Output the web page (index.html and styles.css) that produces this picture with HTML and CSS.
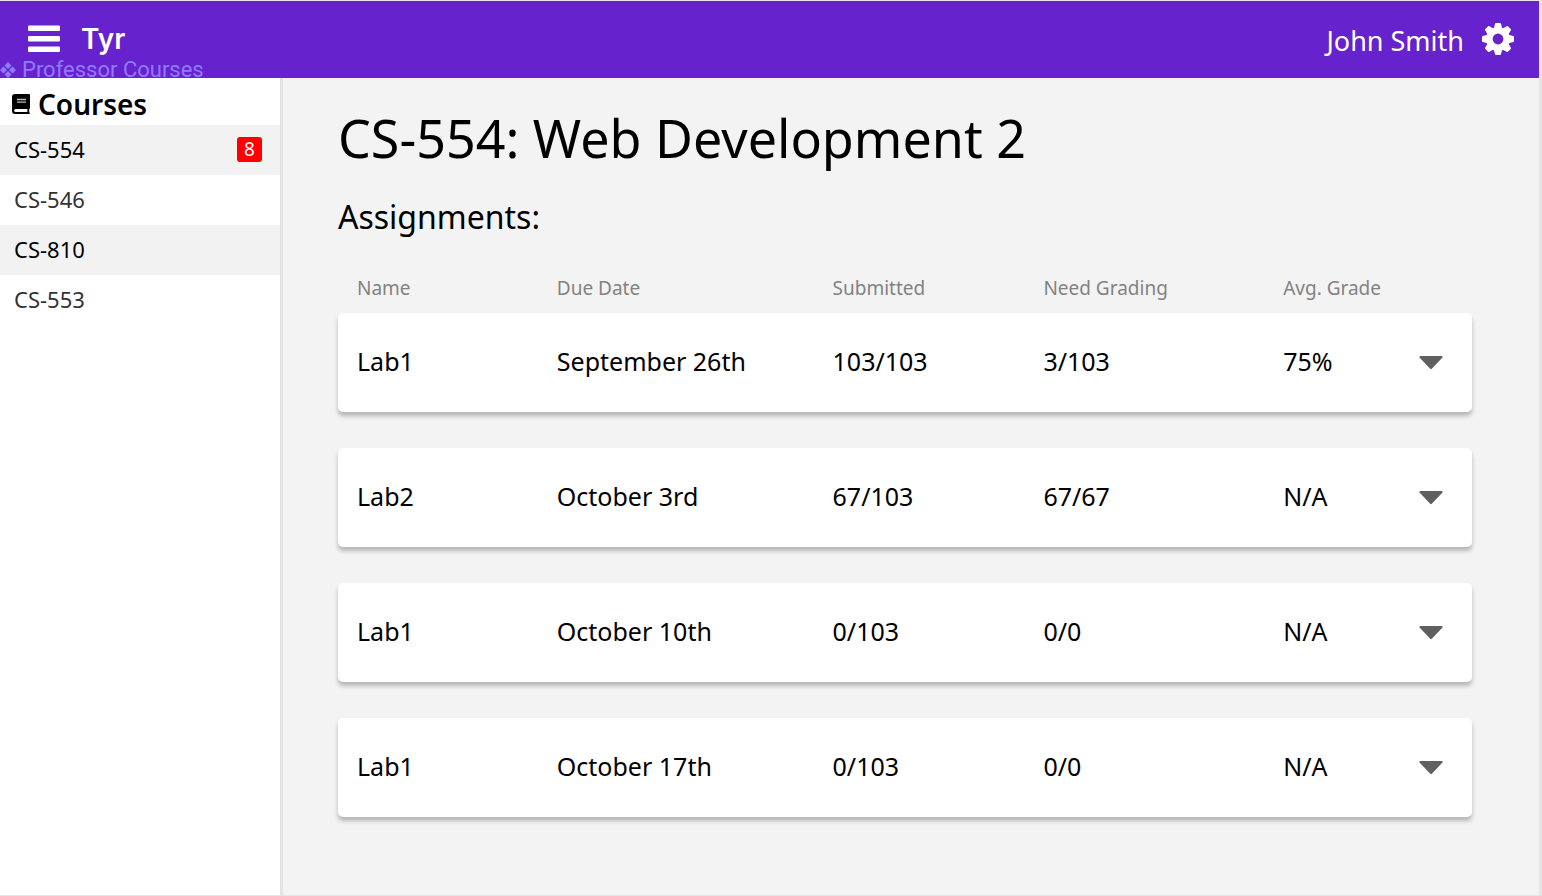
FILE: index.html
```html
<!DOCTYPE html>
<html lang="en">
<head>
<meta charset="utf-8">
<title>Tyr - Professor Courses</title>
<link rel="stylesheet" href="styles.css">
</head>
<body>
<div class="app">
  <header class="topbar">
    <button class="icon-button" type="button" aria-label="Menu">
      <svg width="32" height="28" viewBox="0 0 32 28" fill="#fff"><rect y="0.500" width="32" height="5.500" rx="1"/><rect y="11" width="32" height="5.500" rx="1"/><rect y="21.500" width="32" height="5.500" rx="1"/></svg>
    </button>
    <span class="brand">Tyr</span>
    <span class="user">John Smith</span>
    <button class="icon-button" type="button" aria-label="Settings">
      <svg width="32" height="32" viewBox="-16 -16 32 32">
        <g fill="#fff">
          <circle r="12"/>
          <path id="tooth" d="M-4.200-10.500L-3-15.200Q-2.800-16-2-16H2Q2.800-16 3-15.200L4.200-10.500Z"/>
          <use href="#tooth" transform="rotate(45)"/><use href="#tooth" transform="rotate(90)"/><use href="#tooth" transform="rotate(135)"/><use href="#tooth" transform="rotate(180)"/><use href="#tooth" transform="rotate(225)"/><use href="#tooth" transform="rotate(270)"/><use href="#tooth" transform="rotate(315)"/>
        </g>
        <circle r="5.400" fill="#6622cc"/>
      </svg>
    </button>
    <div class="page-label">
      <svg width="16" height="16" viewBox="0 0 16 16" fill="#8e7bff"><path d="M8 0l3.500 3.500L8 7 4.500 3.500zM8 9l3.500 3.500L8 16l-3.500-3.500zM3.500 4.500L7 8l-3.500 3.500L0 8zM12.500 4.500L16 8l-3.500 3.500L9 8z"/></svg>
      <span>Professor Courses</span>
    </div>
  </header>
  <div class="body">
    <nav class="sidebar" aria-label="Courses">
      <h2 class="sidebar-title">
        <svg width="18" height="20" viewBox="0 0 18 20"><path d="M3 0H17Q18 0 18 1V14Q18 14.700 17.200 15V18.400Q18 18.600 18 19.200T17.200 20H3Q0 20 0 17V3Q0 0 3 0Z"/><path d="M3.600 15H15.400V18H3.600Q2.200 18 2.200 16.500T3.600 15Z" fill="#fff"/><path d="M5 5.500H14M5 8.200H14" stroke="#bbb" stroke-width="1.300"/></svg>
        Courses
      </h2>
      <ul class="course-list">
        <li><a class="course" href="#cs-554">CS-554 <span class="badge">8</span></a></li>
        <li><a class="course" href="#cs-546">CS-546</a></li>
        <li><a class="course" href="#cs-810">CS-810</a></li>
        <li><a class="course" href="#cs-553">CS-553</a></li>
      </ul>
    </nav>
    <main class="content">
      <h1 class="title">CS-554: Web Development 2</h1>
      <h2 class="subtitle">Assignments:</h2>
      <table class="assignments">
        <thead>
          <tr><th>Name</th><th>Due Date</th><th>Submitted</th><th>Need Grading</th><th>Avg. Grade</th></tr>
        </thead>
        <tbody>
          <tr><td>Lab1</td><td>September 26th</td><td>103/103</td><td>3/103</td><td>75%</td><td><button class="expand" type="button" aria-label="Expand"><svg width="24" height="14" viewBox="0 0 24 14"><path d="M1.500 0H22.500Q24 0 23.500 1.500L12.800 12.800Q12 13.500 11.200 12.800L.5 1.500Q0 0 1.500 0Z"/></svg></button></td></tr>
          <tr><td>Lab2</td><td>October 3rd</td><td>67/103</td><td>67/67</td><td>N/A</td><td><button class="expand" type="button" aria-label="Expand"><svg width="24" height="14" viewBox="0 0 24 14"><path d="M1.500 0H22.500Q24 0 23.500 1.500L12.800 12.800Q12 13.500 11.200 12.800L.5 1.500Q0 0 1.500 0Z"/></svg></button></td></tr>
          <tr><td>Lab1</td><td>October 10th</td><td>0/103</td><td>0/0</td><td>N/A</td><td><button class="expand" type="button" aria-label="Expand"><svg width="24" height="14" viewBox="0 0 24 14"><path d="M1.500 0H22.500Q24 0 23.500 1.500L12.800 12.800Q12 13.500 11.200 12.800L.5 1.500Q0 0 1.500 0Z"/></svg></button></td></tr>
          <tr><td>Lab1</td><td>October 17th</td><td>0/103</td><td>0/0</td><td>N/A</td><td><button class="expand" type="button" aria-label="Expand"><svg width="24" height="14" viewBox="0 0 24 14"><path d="M1.500 0H22.500Q24 0 23.500 1.500L12.800 12.800Q12 13.500 11.200 12.800L.5 1.500Q0 0 1.500 0Z"/></svg></button></td></tr>
        </tbody>
      </table>
    </main>
  </div>
</div>
</body>
</html>
```
FILE: styles.css
```css
* {
  box-sizing: border-box;
}

body {
  margin: 0;
  background: #e5e5e5;
  color: #000;
  font-family: "Noto Sans", sans-serif;
}

.app {
  display: flex;
  flex-direction: column;
  min-height: 100vh;
  border: solid #e5e5e5;
  border-width: 1px 3px 1px 0;
}

.topbar {
  position: relative;
  display: flex;
  align-items: center;
  height: 77px;
  padding: 0 25px 2px 28px;
  background: #6622cc;
  color: #fff;
}

.icon-button,
.expand {
  display: flex;
  padding: 0;
  border: 0;
  background: none;
}

.brand {
  margin-left: 21px;
  font: 600 28px/36px Inter, sans-serif;
}

.user {
  margin: 4px 18px 0 auto;
  font-size: 27px;
  line-height: 36px;
}

.page-label {
  position: absolute;
  left: 0;
  top: 60px;
  display: flex;
  align-items: center;
  gap: 6px;
  color: #8e7bff;
  font: 22px/17px Roboto, sans-serif;
}

.body {
  display: flex;
  flex: 1;
}

.sidebar {
  flex: none;
  width: 283px;
  border-right: 3px solid #e3e3e3;
  background: #fff;
}

.sidebar-title {
  display: flex;
  align-items: center;
  gap: 8px;
  height: 47px;
  margin: 0;
  padding: 4px 12px 0;
  font-size: 28px;
  font-weight: 600;
  line-height: 36px;
}

.course-list {
  margin: 0;
  padding: 0;
  list-style: none;
}

.course {
  display: flex;
  align-items: center;
  justify-content: space-between;
  height: 50px;
  padding: 0 18px 2px 14px;
  color: #333;
  font-size: 22px;
  text-decoration: none;
}

li:nth-child(odd) .course {
  background: #f2f2f2;
  color: #000;
}

.badge {
  width: 25px;
  border-radius: 3px;
  background: #f00;
  color: #fff;
  font-size: 19px;
  line-height: 25px;
  text-align: center;
}

.content {
  flex: 1;
  padding: 24px 67px 36px 55px;
  background: #f3f3f3;
}

.title {
  margin: 0;
  font-size: 52px;
  font-weight: 400;
  line-height: 72px;
}

.subtitle {
  margin: 20px 0 0;
  font-size: 32px;
  font-weight: 400;
  line-height: 46px;
}

.assignments,
.assignments thead,
.assignments tbody {
  display: block;
}

.assignments tr {
  display: grid;
  grid-template-columns: 200fr 276fr 211fr 240fr 136fr 53fr;
  align-items: center;
  padding-left: 19px;
}

.assignments th,
.assignments td {
  padding: 0;
  text-align: left;
  font-weight: 400;
}

.assignments thead {
  margin-top: 35px;
  color: #828282;
  font-size: 19px;
  line-height: 26px;
}

.assignments tbody {
  margin-top: 12px;
  font-size: 25px;
}

.assignments tbody td {
  padding-bottom: 4px;
}

.assignments tbody td:last-child {
  padding: 0;
}

.assignments tbody tr {
  height: 99px;
  margin-bottom: 36px;
  border-radius: 5px;
  background: #fff;
  box-shadow: 0 4px 4px rgba(0, 0, 0, 0.25);
}

.expand svg {
  fill: #606060;
}
```
